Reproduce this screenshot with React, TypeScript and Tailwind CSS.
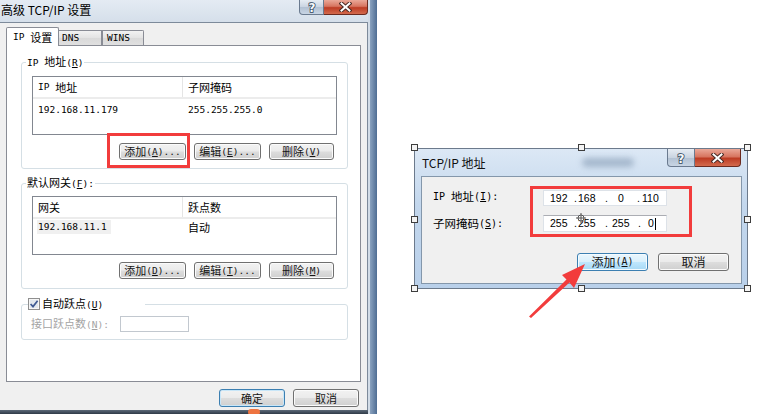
import React from "react";

const CN = "font-['Noto_Sans_CJK_SC',sans-serif]";

function A({ children, className = "text-[9.5px]" }: { children: React.ReactNode; className?: string }) {
  return <span className={`font-['DejaVu_Sans_Mono',monospace] ${className}`}>{children}</span>;
}

function Key({ k, tail = "", className }: { k: string; tail?: string; className?: string }) {
  return (
    <A className={className}>
      (<span className="underline decoration-1 underline-offset-[1px]">{k}</span>){tail}
    </A>
  );
}

function Btn({ children, className = "", def = false, hot = false }: { children: React.ReactNode; className?: string; def?: boolean; hot?: boolean }) {
  let skin = "border-[#707070] bg-[linear-gradient(#f2f2f2_0%,#ebebeb_48%,#dddddd_52%,#cfcfcf_100%)] shadow-[inset_0_0_0_1px_#fbfbfb]";
  if (def) skin = "border-[#3c7fb1] bg-[linear-gradient(#f2f2f2_0%,#ebebeb_48%,#dddddd_52%,#cfcfcf_100%)] shadow-[inset_0_0_0_1px_#c8e6f8]";
  if (hot) skin = "border-[#3c7fb1] bg-[linear-gradient(#eaf6fd_0%,#d9f0fc_48%,#bee6fd_52%,#a7d9f5_100%)] shadow-[inset_0_0_0_1px_#f4fbff]";
  return (
    <div className={`${CN} flex items-center justify-center rounded-[3px] border text-[11px] leading-none text-[#151515] ${skin} ${className}`}>
      {children}
    </div>
  );
}

function CloseX() {
  return (
    <svg width="13" height="10" viewBox="0 0 13 10">
      <path d="M2.5 1.5 L10.5 8.5 M10.5 1.5 L2.5 8.5" stroke="#4a2a24" strokeWidth="4" strokeLinecap="square" />
      <path d="M2.5 1.5 L10.5 8.5 M10.5 1.5 L2.5 8.5" stroke="#ffffff" strokeWidth="2" strokeLinecap="square" />
    </svg>
  );
}

function Caption({ helpCls, closeCls }: { helpCls: string; closeCls: string }) {
  return (
    <div className="flex">
      <div className={`flex items-center justify-center rounded-bl-[4px] border border-t-0 border-[#6a7a8f] bg-[linear-gradient(#e6ecf3,#c9d4e1_50%,#b1c0d2_51%,#c8d5e4)] ${helpCls}`}>
        <svg width="10" height="12" viewBox="0 0 10 12">
          <text
            x="5"
            y="10.5"
            textAnchor="middle"
            fontFamily="DejaVu Sans, sans-serif"
            fontWeight="bold"
            fontSize="12"
            fill="#f7f9fb"
            stroke="#34465c"
            strokeWidth="1.6"
            paintOrder="stroke"
          >
            ?
          </text>
        </svg>
      </div>
      <div className={`flex items-center justify-center rounded-br-[4px] border border-l-0 border-t-0 border-[#6b2a1f] bg-[linear-gradient(#eaa898,#d77560_45%,#bd3c24_55%,#d36a4d)] ${closeCls}`}>
        <CloseX />
      </div>
    </div>
  );
}

function ListHead({ a, b }: { a: React.ReactNode; b: React.ReactNode }) {
  return (
    <div className={`${CN} flex h-[22px] border-b-[2px] border-[#ececec] bg-white text-[11px] leading-none text-black`}>
      <div className="flex w-[150px] items-center border-r border-[#e5e5e5] pl-[5px]">{a}</div>
      <div className="flex items-center pl-[5px]">{b}</div>
    </div>
  );
}

function LeftDialog() {
  return (
    <div className="absolute left-0 top-0 flex h-[414px] w-[377px]">
      <div className="flex w-[368px] flex-col">
        <div className="flex h-[22px] items-start justify-between bg-[linear-gradient(#e4ebf3,#d5dfea)]">
          <span className={`${CN} pl-[1px] pt-[2px] text-[12px] leading-[16px] text-black`}>高级 TCP/IP 设置</span>
          <Caption helpCls="h-[15px] w-[25px]" closeCls="h-[15px] w-[44px]" />
        </div>

        <div className="flex flex-1 flex-col border-r border-t border-[#7d8a9a] bg-[#f0f0f0] pl-[6px] pt-[4px]">
          {/* tabs */}
          <div className={`${CN} relative z-10 -mb-px flex h-[19px] items-end text-[11px] leading-none text-black`}>
            <div className="flex h-[19px] w-[53px] items-center rounded-t-[2px] border border-b-0 border-[#898c95] bg-white pl-[6px]">
              <A>IP&nbsp;</A>设置
            </div>
            <div className="mb-px flex h-[15px] w-[43px] items-center border border-b-0 border-l-0 border-[#898c95] bg-[linear-gradient(#f2f2f2,#e3e3e3_50%,#d9d9d9_51%,#e0e0e0)] pl-[3px]">
              <A>DNS</A>
            </div>
            <div className="mb-px flex h-[15px] w-[42px] items-center rounded-tr-[2px] border border-b-0 border-[#898c95] bg-[linear-gradient(#f2f2f2,#e3e3e3_50%,#d9d9d9_51%,#e0e0e0)] pl-[4px]">
              <A>WINS</A>
            </div>
          </div>

          {/* panel */}
          <div className="flex h-[337px] w-[355px] flex-col border border-[#898c95] bg-white pl-[14px] pt-[8px]">
            <fieldset className="w-[327px] rounded-[3px] border border-[#d5dfe5] p-0">
              <legend className={`${CN} ml-[4px] px-[1px] text-[11px] leading-[14px] text-black`}>
                <A>IP&nbsp;</A>地址<Key k="R" />
              </legend>
              <div className="flex flex-col px-[10px] pb-[8px] pt-[6px]">
                <div className="h-[59px] border border-[#828790] bg-white">
                  <ListHead a={<><A>IP&nbsp;</A>地址</>} b="子网掩码" />
                  <div className="mt-[1px] flex h-[14px] items-center text-black">
                    <div className="w-[150px] pl-[5px]"><A>192.168.11.179</A></div>
                    <div className="pl-[5px]"><A>255.255.255.0</A></div>
                  </div>
                </div>
                <div className="mr-[3px] mt-[8px] flex justify-end gap-[8px]">
                  <Btn className="h-[17px] w-[67px]">添加<Key k="A" tail="..." /></Btn>
                  <Btn className="h-[17px] w-[67px]">编辑<Key k="E" tail="..." /></Btn>
                  <Btn className="h-[17px] w-[65px]">删除<Key k="V" /></Btn>
                </div>
              </div>
            </fieldset>

            <fieldset className="mt-[6px] w-[327px] rounded-[3px] border border-[#d5dfe5] p-0">
              <legend className={`${CN} ml-[4px] px-[1px] text-[11px] leading-[14px] text-black`}>
                默认网关<Key k="F" tail=":" />
              </legend>
              <div className="flex flex-col px-[10px] pb-[9px] pt-[5px]">
                <div className="h-[59px] border border-[#828790] bg-white">
                  <ListHead a="网关" b="跃点数" />
                  <div className={`${CN} mt-[1px] flex h-[14px] items-center text-[11px] leading-none text-black`}>
                    <div className="w-[150px] pl-[4px]">
                      <div className="flex h-[14px] w-[74px] items-center bg-[#f0f0f0] pl-[1px]"><A>192.168.11.1</A></div>
                    </div>
                    <div className="pl-[5px]">自动</div>
                  </div>
                </div>
                <div className="mr-[3px] mt-[7px] flex justify-end gap-[8px]">
                  <Btn className="h-[17px] w-[67px]">添加<Key k="D" tail="..." /></Btn>
                  <Btn className="h-[17px] w-[67px]">编辑<Key k="T" tail="..." /></Btn>
                  <Btn className="h-[17px] w-[65px]">删除<Key k="M" /></Btn>
                </div>
              </div>
            </fieldset>

            <fieldset className="mt-[8px] w-[327px] rounded-[3px] border border-[#d5dfe5] p-0">
              <legend className={`${CN} ml-[6px] flex h-[14px] w-[117px] items-center gap-[2px] text-[11px] leading-none text-black`}>
                <svg width="12" height="12" viewBox="0 0 12 12">
                  <rect x="0.5" y="0.5" width="11" height="11" fill="#f6f6f6" stroke="#8f8f8f" />
                  <rect x="2" y="2" width="8" height="8" fill="#e2e8ee" />
                  <path d="M2.6 6 L5 8.6 L9.6 2.8" stroke="#3f5a93" strokeWidth="1.7" fill="none" />
                </svg>
                <span>自动跃点<Key k="U" /></span>
              </legend>
              <div className={`${CN} flex items-center pb-[7px] pl-[9px] pt-[5px] text-[11px] leading-none text-[#a3a3a3]`}>
                <div className="w-[89px]">接口跃点数<Key k="N" tail=":" /></div>
                <div className="h-[16px] w-[69px] border border-[#c2c8cf] bg-white" />
              </div>
            </fieldset>
          </div>

          <div className="mt-[7px] flex justify-end gap-[8px] pr-[8px]">
            <Btn def className="h-[18px] w-[66px]">确定</Btn>
            <Btn className="h-[18px] w-[66px]">取消</Btn>
          </div>
        </div>
        <div className="h-[4px] bg-[linear-gradient(#5c6978,#2f3a47)]" />
      </div>
      <div className="w-[9px] border-l-[2px] border-[#d2dce7] bg-[linear-gradient(90deg,#8aa2bf,#4f6d93)]" />
    </div>
  );
}

type Seg = { t: string; w?: string };

function IpRow({ segs, cursor = false }: { segs: Seg[]; cursor?: boolean }) {
  return (
    <div className="flex h-full items-center whitespace-pre pl-[6px] font-['Liberation_Sans',sans-serif] text-[10.5px] leading-none text-black">
      {segs.map((s, i) => (
        <span key={i} className={s.w}>{s.t}</span>
      ))}
      {cursor && <span className="h-[12px] w-px bg-black" />}
    </div>
  );
}

function RightDialog() {
  return (
    <div className="absolute left-[414px] top-[148px] flex h-[141px] w-[334px] flex-col border border-[#6c7a8c] bg-[linear-gradient(#dce8f5,#c3d7ed_40%,#b9d0ea)] pb-[4px] pl-[6px] pr-[5px]">
      <div className="flex h-[27px] items-start justify-between">
        <div className="flex h-[27px] items-center">
          <span className={`${CN} pl-[1px] text-[12px] leading-none text-[#101010]`}>TCP/IP 地址</span>
          <div className="ml-[96px] h-[9px] w-[52px] rounded-full bg-[#8ea3bb] opacity-70 blur-[3px]" />
        </div>
        <div className="mr-px">
          <Caption helpCls="h-[18px] w-[28px]" closeCls="h-[18px] w-[46px]" />
        </div>
      </div>
      <div className="flex h-[108px] flex-col border border-[#8497ab] bg-[#f0f0f0] pt-[9px]">
        <div className="flex">
          <div className={`${CN} flex w-[108px] flex-col gap-[11px] pl-[11px] pt-[3px] text-[11.5px] leading-none text-black`}>
            <div className="flex h-[16px] items-center"><A className="text-[10px]">IP&nbsp;</A>地址<Key k="I" tail=":" className="text-[10px]" /></div>
            <div className="flex h-[16px] items-center">子网掩码<Key k="S" tail=":" className="text-[10px]" /></div>
          </div>
          <div className="h-[51px] w-[162px] border-[3px] border-[#f23c3c] pl-[10px] pt-[1px]">
            <div className="h-[16px] w-[124px] border border-[#dde2e8] bg-white">
              <IpRow segs={[{ t: "192", w: "w-[24px]" }, { t: ".", w: "w-[4px]" }, { t: "168", w: "w-[27px]" }, { t: ".", w: "w-[13px]" }, { t: "0", w: "w-[19px]" }, { t: ".", w: "w-[5px]" }, { t: "110" }]} />
            </div>
            <div className="mt-[9px] h-[17px] w-[124px] border border-[#dde2e8] border-t-[#abadb3] bg-white">
              <IpRow cursor segs={[{ t: "255", w: "w-[24px]" }, { t: ".", w: "w-[4px]" }, { t: "255", w: "w-[27px]" }, { t: ".", w: "w-[7px]" }, { t: "255", w: "w-[26px]" }, { t: ".", w: "w-[10px]" }, { t: "0", w: "w-[7px]" }]} />
            </div>
          </div>
        </div>
        <div className="mt-[16px] flex justify-end gap-[10px] pr-[12px]">
          <Btn hot className="h-[18px] w-[71px] text-[12px]">添加<Key k="A" className="text-[10px]" /></Btn>
          <Btn className="h-[18px] w-[71px] text-[12px]">取消</Btn>
        </div>
      </div>
    </div>
  );
}

const handles: [number, number][] = [
  [414, 147], [581, 147], [747, 147],
  [414, 219], [747, 219],
  [414, 288], [581, 288], [747, 288],
];

export default function App() {
  return (
    <div className="relative h-[414px] w-[777px] overflow-hidden bg-white">
      <LeftDialog />
      <RightDialog />

      {handles.map(([x, y], i) => (
        <div
          key={i}
          className="absolute h-[7px] w-[7px] border border-[#3d3d3d] bg-[#f4f4f4]"
          style={{ left: x - 3, top: y - 3 }}
        />
      ))}

      {/* annotation around the add button */}
      <div className="absolute left-[107px] top-[133px] h-[35px] w-[83px] border-[3px] border-[#f23c3c]" />
      <div className="absolute left-[248px] top-[409px] h-[6px] w-[12px] rounded-full bg-[#ee7440]" />

      <svg className="pointer-events-none absolute left-0 top-0" width="777" height="414" viewBox="0 0 777 414">
        <polygon
          points="585,264 562,275 566.5,279.5 529,316.5 531,318 569.5,282.5 574,288"
          fill="#f23c3c"
        />
        <g transform="translate(581 218)" stroke="#555" strokeWidth="1" fill="none">
          <circle r="3" fill="#fff" />
          <path d="M-5 0 H5 M0 -5 V5" />
        </g>
      </svg>
    </div>
  );
}
